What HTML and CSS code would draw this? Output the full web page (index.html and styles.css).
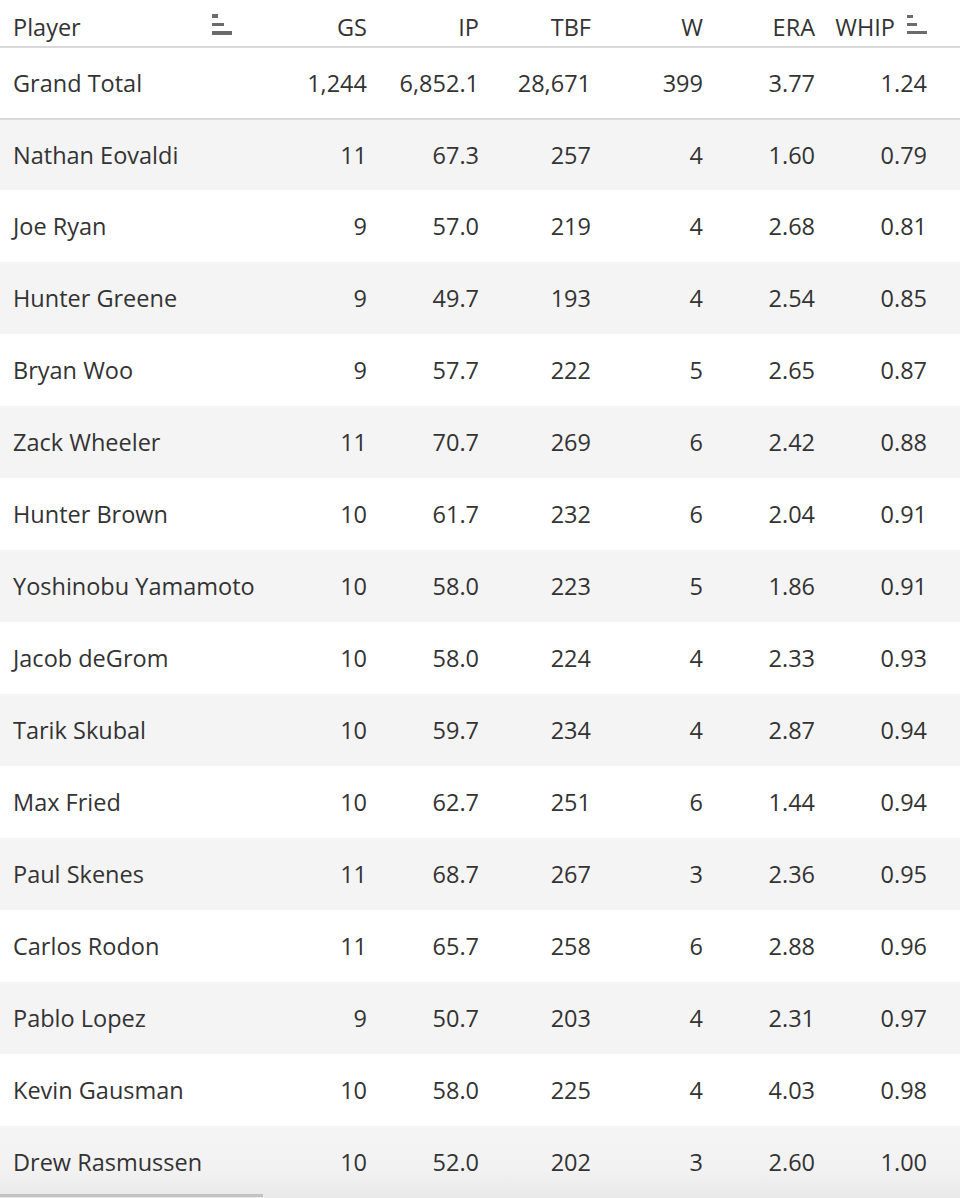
FILE: index.html
```html
<!DOCTYPE html>
<html>
<head>
<meta charset="utf-8">
<link rel="stylesheet" href="styles.css">
</head>
<body>
<div class="table">
  <div class="row head">
    <div class="cell player"><span>Player</span>
      <svg class="sort" width="20" height="22" viewBox="0 0 20 22"><rect x="0" y="0" width="6" height="4"/><rect x="0" y="9" width="12" height="3"/><rect x="0" y="17" width="20" height="4"/></svg>
    </div>
    <div class="cell num">GS</div>
    <div class="cell num">IP</div>
    <div class="cell num">TBF</div>
    <div class="cell num">W</div>
    <div class="cell num">ERA</div>
    <div class="cell num whip">WHIP
      <svg class="sort" width="20" height="20" viewBox="0 0 20 20"><rect x="0" y="0" width="6" height="3"/><rect x="0" y="8" width="10" height="3"/><rect x="0" y="16" width="20" height="3"/></svg>
    </div>
  </div>
  <div class="row total">
    <div class="cell player">Grand Total</div>
    <div class="cell num">1,244</div>
    <div class="cell num">6,852.1</div>
    <div class="cell num">28,671</div>
    <div class="cell num">399</div>
    <div class="cell num">3.77</div>
    <div class="cell num">1.24</div>
  </div>
  <div class="body">
    <div class="row data"><div class="cell player">Nathan Eovaldi</div><div class="cell num">11</div><div class="cell num">67.3</div><div class="cell num">257</div><div class="cell num">4</div><div class="cell num">1.60</div><div class="cell num">0.79</div></div>
    <div class="row data"><div class="cell player">Joe Ryan</div><div class="cell num">9</div><div class="cell num">57.0</div><div class="cell num">219</div><div class="cell num">4</div><div class="cell num">2.68</div><div class="cell num">0.81</div></div>
    <div class="row data"><div class="cell player">Hunter Greene</div><div class="cell num">9</div><div class="cell num">49.7</div><div class="cell num">193</div><div class="cell num">4</div><div class="cell num">2.54</div><div class="cell num">0.85</div></div>
    <div class="row data"><div class="cell player">Bryan Woo</div><div class="cell num">9</div><div class="cell num">57.7</div><div class="cell num">222</div><div class="cell num">5</div><div class="cell num">2.65</div><div class="cell num">0.87</div></div>
    <div class="row data"><div class="cell player">Zack Wheeler</div><div class="cell num">11</div><div class="cell num">70.7</div><div class="cell num">269</div><div class="cell num">6</div><div class="cell num">2.42</div><div class="cell num">0.88</div></div>
    <div class="row data"><div class="cell player">Hunter Brown</div><div class="cell num">10</div><div class="cell num">61.7</div><div class="cell num">232</div><div class="cell num">6</div><div class="cell num">2.04</div><div class="cell num">0.91</div></div>
    <div class="row data"><div class="cell player">Yoshinobu Yamamoto</div><div class="cell num">10</div><div class="cell num">58.0</div><div class="cell num">223</div><div class="cell num">5</div><div class="cell num">1.86</div><div class="cell num">0.91</div></div>
    <div class="row data"><div class="cell player">Jacob deGrom</div><div class="cell num">10</div><div class="cell num">58.0</div><div class="cell num">224</div><div class="cell num">4</div><div class="cell num">2.33</div><div class="cell num">0.93</div></div>
    <div class="row data"><div class="cell player">Tarik Skubal</div><div class="cell num">10</div><div class="cell num">59.7</div><div class="cell num">234</div><div class="cell num">4</div><div class="cell num">2.87</div><div class="cell num">0.94</div></div>
    <div class="row data"><div class="cell player">Max Fried</div><div class="cell num">10</div><div class="cell num">62.7</div><div class="cell num">251</div><div class="cell num">6</div><div class="cell num">1.44</div><div class="cell num">0.94</div></div>
    <div class="row data"><div class="cell player">Paul Skenes</div><div class="cell num">11</div><div class="cell num">68.7</div><div class="cell num">267</div><div class="cell num">3</div><div class="cell num">2.36</div><div class="cell num">0.95</div></div>
    <div class="row data"><div class="cell player">Carlos Rodon</div><div class="cell num">11</div><div class="cell num">65.7</div><div class="cell num">258</div><div class="cell num">6</div><div class="cell num">2.88</div><div class="cell num">0.96</div></div>
    <div class="row data"><div class="cell player">Pablo Lopez</div><div class="cell num">9</div><div class="cell num">50.7</div><div class="cell num">203</div><div class="cell num">4</div><div class="cell num">2.31</div><div class="cell num">0.97</div></div>
    <div class="row data"><div class="cell player">Kevin Gausman</div><div class="cell num">10</div><div class="cell num">58.0</div><div class="cell num">225</div><div class="cell num">4</div><div class="cell num">4.03</div><div class="cell num">0.98</div></div>
    <div class="row data last"><div class="cell player">Drew Rasmussen</div><div class="cell num">10</div><div class="cell num">52.0</div><div class="cell num">202</div><div class="cell num">3</div><div class="cell num">2.60</div><div class="cell num">1.00</div></div>
  </div>
</div>
<div class="scrollbar"></div>
</body>
</html>
```
FILE: styles.css
```css
html, body {
  margin: 0;
  padding: 0;
  background: #fff;
  overflow: hidden;
  height: 1198px;
}
body {
  font-family: "Open Sans", "Noto Sans", sans-serif;
  font-size: 23.5px;
  font-weight: 500;
  color: #333333;
  position: relative;
}
.table {
  width: 960px;
}
.row {
  display: grid;
  grid-template-columns: 255px repeat(6, 112px);
  padding-right: 33px;
  align-items: center;
}
.cell.player {
  padding-left: 13px;
  white-space: nowrap;
}
.cell.num {
  text-align: right;
  white-space: nowrap;
}
.head {
  box-sizing: border-box;
  height: 48px;
  padding-top: 8px;
  border-bottom: 2px solid #d9d9d9;
}
.head .player {
  display: flex;
  align-items: center;
  justify-content: space-between;
  padding-right: 23px;
}
.head .whip {
  display: flex;
  justify-content: flex-end;
  align-items: center;
  gap: 12px;
}
.sort {
  fill: #6b6b6b;
  display: block;
  margin-top: -4px;
}
.total {
  height: 70px;
  border-bottom: 2px solid #d9d9d9;
}
.data {
  height: 72px;
}
.data:first-child {
  height: 70px;
}
.data:nth-child(odd) {
  background: #f4f4f4;
}
.data.last {
  background: linear-gradient(#f4f4f4 0%, #f2f2f2 60%, #e9e9e9 100%);
}
.scrollbar {
  position: absolute;
  left: 0;
  top: 1194px;
  width: 263px;
  height: 3px;
  background: #c2c2c2;
}
```
